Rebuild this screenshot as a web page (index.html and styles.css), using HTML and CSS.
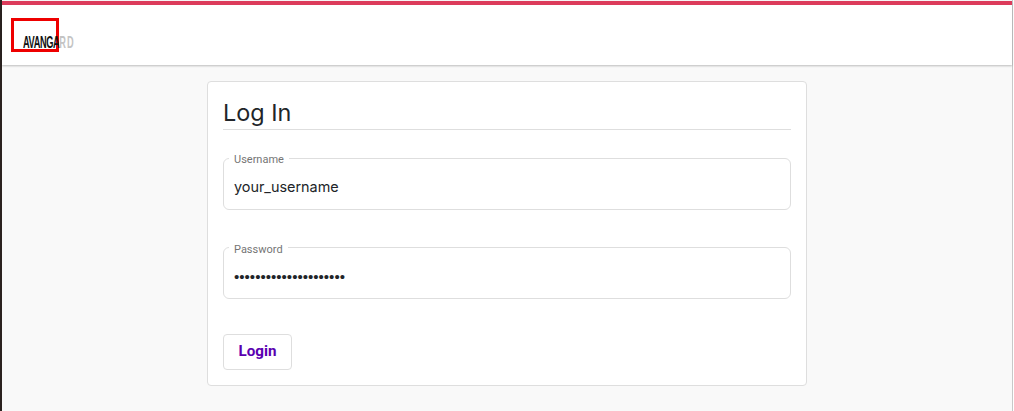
FILE: index.html
```html
<!DOCTYPE html>
<html lang="en">
<head>
<meta charset="utf-8">
<title>Log In</title>
<link rel="stylesheet" href="styles.css">
</head>
<body>
<div class="page">
  <header class="header">
    <div class="logo-mark"></div>
    <div class="logo"><span class="logo-dark">AVANGA</span><span class="logo-light">RD</span></div>
  </header>
  <main class="main">
    <form class="card">
      <h1 class="title">Log In</h1>
      <fieldset class="field field-user">
        <legend class="legend">Username</legend>
        <div class="value">your_username</div>
      </fieldset>
      <fieldset class="field field-pass">
        <legend class="legend">Password</legend>
        <div class="value dots">•••••••••••••••••••••</div>
      </fieldset>
      <button class="btn" type="button">Login</button>
    </form>
  </main>
</div>
</body>
</html>
```
FILE: styles.css
```css
* { box-sizing: border-box; }
html, body { margin: 0; height: 100%; overflow: hidden; }
body { background: #fff; font-family: "Inter", "Liberation Sans", sans-serif; }
.page {
  height: 411px;
  width: 1013px;
  padding-top: 1px;
  background: #f9f9f9;
  border-left: 2px solid #2b2220;
  border-right: 1px solid #c8c8c8;
}
.header {
  position: relative;
  height: 64px;
  background: #fff;
  border-top: 4px solid #dc3b5b;
  box-shadow: 0 1px 2px rgba(0,0,0,.25);
  padding: 24px 0 0 21px;
}
.logo {
  position: relative;
  font-family: "Liberation Sans", sans-serif;
  font-weight: 700;
  font-size: 16.5px;
  line-height: 26px;
  width: 95px;
  transform: scaleX(.56);
  transform-origin: left center;
  white-space: nowrap;
}
.logo-dark { color: #111; letter-spacing: -.7px; }
.logo-light { color: #c4c4c4; letter-spacing: 1.8px; }
.logo-mark {
  position: absolute;
  left: 9px;
  top: 13px;
  width: 48px;
  height: 34px;
  border: 3px solid #ee0000;
}
.main { padding: 16px 0 0 205px; }
.card {
  width: 600px;
  height: 305px;
  background: #fff;
  border: 1px solid #dedede;
  border-radius: 4px;
  padding: 15px 15px 0;
}
.title {
  margin: 0;
  height: 33px;
  font-size: 23.4px;
  line-height: 32px;
  font-weight: 400;
  color: #212529;
  border-bottom: 1px solid #dedede;
}
.field {
  margin: 0;
  padding: 0 5px;
  border: 1px solid #dedede;
  border-radius: 6px;
  min-width: 0;
}
.field-user { margin-top: 21px; height: 59px; }
.field-pass { margin-top: 29px; height: 60px; }
.legend {
  padding: 2px 5px 0;
  font-family: "Roboto", sans-serif;
  font-size: 11px;
  line-height: 13px;
  color: #757575;
}
.field-pass .legend { padding-top: 4px; }
.value {
  height: 37px;
  margin: 2px 0 0 5px;
  font-size: 14.4px;
  line-height: 37px;
  color: #212529;
}
.dots {
  margin-top: 1px;
  font-family: "Liberation Sans", sans-serif;
  font-size: 15.1px;
  line-height: 39px;
}
.btn {
  display: block;
  margin-top: 35px;
  width: 69px;
  height: 36px;
  padding: 0 0 2px;
  background: #fff;
  border: 1px solid #dedede;
  border-radius: 4px;
  font-family: "Roboto", sans-serif;
  font-size: 15.2px;
  font-weight: 700;
  color: #5a00b0;
}
```
